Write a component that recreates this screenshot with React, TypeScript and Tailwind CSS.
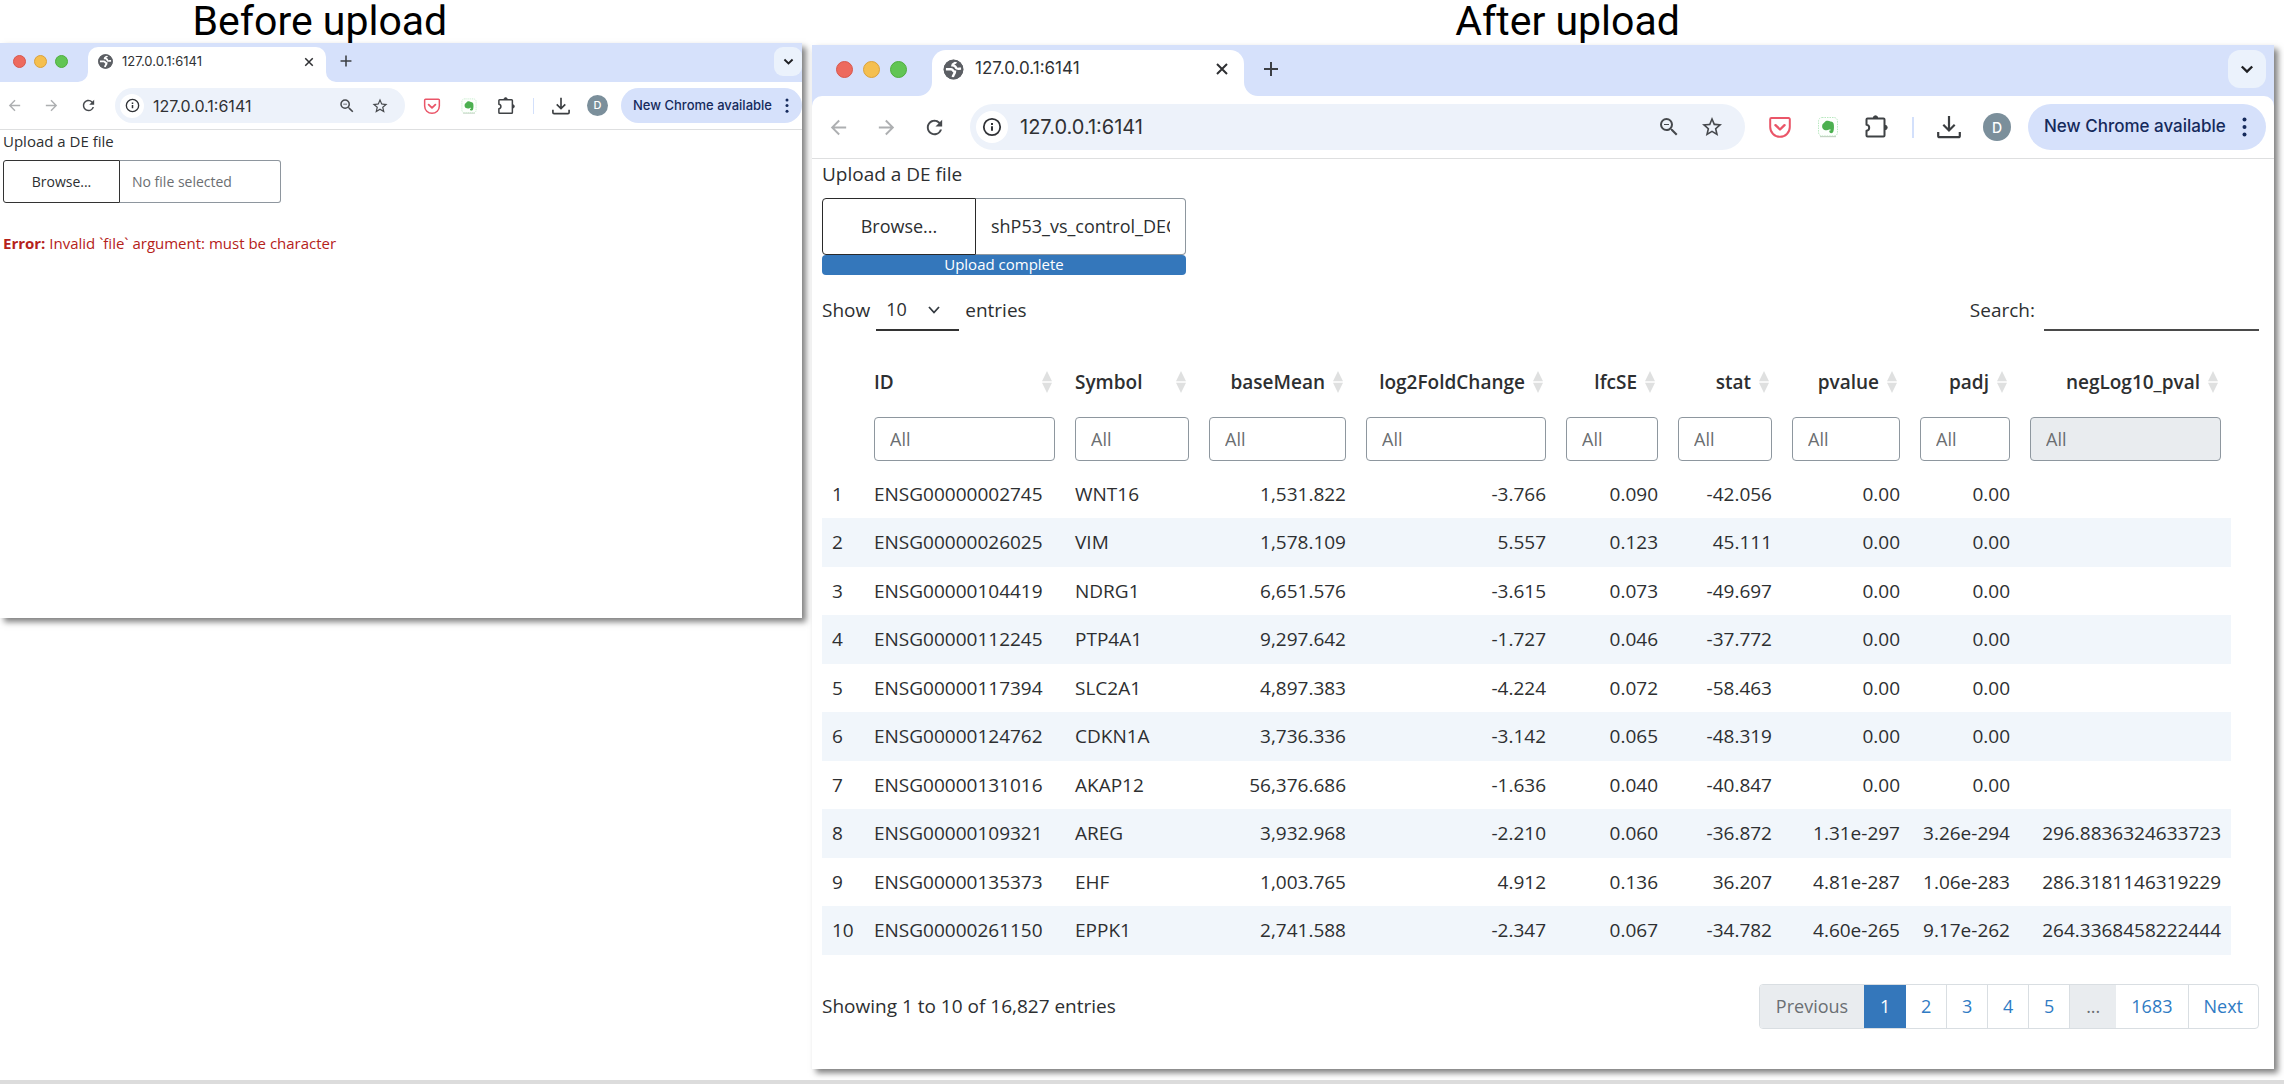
import React from "react";
import { MdArrowBack, MdArrowForward, MdRefresh, MdStarBorder, MdZoomOut } from "react-icons/md";

const small = {
  strip: "h-[39px] pl-[13px]",
  lights: "gap-2 pb-[2px]",
  light: "size-[13px]",
  tabWrap: "ml-[20px] mt-[4px] w-[238px] pb-[6px] pl-[9px] pr-[11px] rounded-t-[10px]",
  curve: "size-[10px]",
  curveL: "-left-[10px]",
  curveR: "-right-[10px]",
  tabIcon: "size-[17px]",
  tabText: "text-[13px] ml-[8px]",
  tabX: "size-[12px]",
  plus: "size-[14px] mt-[11px] ml-[13px]",
  menu: "mt-[4px] w-[28px] h-[29px] rounded-[9px]",
  menuIcon: "size-[11px]",
  bar: "h-[48px]",
  nav: "w-[37px]",
  navFirst: "-ml-1",
  navIcon: "size-[17px]",
  pill: "ml-[8px] h-[35px] pl-[5px] pr-[9px]",
  info: "size-[24px]",
  infoIcon: "size-[15px]",
  url: "ml-[9px] text-[16px]",
  pillBtn: "w-[33px]",
  ext: "ml-[8px]",
  extIcon: "size-[18px]",
  divider: "ml-[9px] mr-[8px] h-[16px] w-px",
  avatar: "size-[21px] text-[11px]",
  chrome: "ml-[5px] h-[35px] w-[181px] pl-[12px] pr-[13px] text-[13px]",
  dots: "h-[15px] w-[4px]",
};

const large: typeof small = {
  strip: "h-[51px] pl-[24px] pr-[8px]",
  lights: "gap-[10px] pb-[3px]",
  light: "size-[17px]",
  tabWrap: "ml-[25px] mt-[5px] w-[312px] pb-[8px] pl-[10px] pr-[14px] rounded-t-[14px]",
  curve: "size-[14px]",
  curveL: "-left-[14px]",
  curveR: "-right-[14px]",
  tabIcon: "size-[23px]",
  tabText: "text-[17px] ml-[10px]",
  tabX: "size-[16px]",
  plus: "size-[18px] mt-[15px] ml-[18px]",
  menu: "mt-[5px] size-[38px] rounded-[12px]",
  menuIcon: "size-[14px]",
  bar: "h-[63px] pr-[8px] rounded-t-[10px]",
  nav: "w-[48px]",
  navFirst: "ml-[2px]",
  navIcon: "size-[23px]",
  pill: "ml-[12px] h-[46px] pl-[6px] pr-[12px]",
  info: "size-[32px]",
  infoIcon: "size-[20px]",
  url: "ml-[12px] text-[20px]",
  pillBtn: "w-[43px]",
  ext: "ml-[11px]",
  extIcon: "size-[24px]",
  divider: "ml-[12px] mr-[11px] h-[21px] w-[2px]",
  avatar: "size-[28px] text-[14px]",
  chrome: "ml-[7px] h-[46px] w-[238px] pl-[16px] pr-[19px] text-[17px]",
  dots: "h-[20px] w-[5px]",
};

function GlobeIcon({ className }: { className: string }) {
  return (
    <svg viewBox="0 0 24 24" className={className} fill="none" aria-hidden="true">
      <circle cx="12" cy="12" r="10.200" fill="#5c5f64" />
      <path
        d="M4 11.800h5.500c2.200 0 2.200 2.600 4 2.600 0 2.600-2.200 2.400-2.200 5.800"
        stroke="#fff"
        strokeWidth="2.600"
      />
      <path d="M14.500 3.800c-.5 2.400-3.700 1.600-3.700 3.900 1.700 0 3.400.4 4 2.900.8 1.200 3 .4 5.200.6" stroke="#fff" strokeWidth="2.400" />
      <circle cx="12" cy="12" r="9.400" stroke="#5c5f64" strokeWidth="1.900" />
    </svg>
  );
}

function InfoIcon({ className }: { className: string }) {
  return (
    <svg viewBox="0 0 20 20" className={className} fill="none" stroke="#303236" strokeWidth="1.800" aria-hidden="true">
      <circle cx="10" cy="10" r="8.200" />
      <path d="M10 9.200v4.600M10 6v1.900" strokeWidth="2" />
    </svg>
  );
}

function PocketIcon({ className }: { className: string }) {
  return (
    <svg viewBox="0 0 24 24" className={className} fill="none" stroke="#ea5568" strokeWidth="2" aria-hidden="true">
      <path d="M3.400 3h17.200a1.200 1.200 0 0 1 1.200 1.200V12a9.800 9.800 0 0 1-19.600 0V4.200A1.200 1.200 0 0 1 3.400 3z" />
      <path d="M7.500 10.200 12 14.500l4.500-4.300" strokeWidth="2.400" strokeLinecap="round" strokeLinejoin="round" />
    </svg>
  );
}

function ElephantIcon({ className }: { className: string }) {
  return (
    <svg viewBox="0 0 24 24" className={className} aria-hidden="true">
      <rect x="2.500" y="2.500" width="19" height="18.500" rx="3.500" fill="#fdfffd" stroke="#b9e8c0" strokeDasharray="1.500 1" />
      <path d="M4 21.600h16" stroke="#c3d3c3" strokeWidth="1.200" />
      <path
        d="M6.500 9.300 9.800 6c1.700-.6 3.600-.3 4.600.6 2.500.3 3.300 1.200 3.500 3.600.2 2.800 0 6.200-1.300 7.600-1.600.8-3.500.1-3.300-1.500.1-1 1-1.300 1.800-1-.2-1-1.300-1-2-.8-1 1-3.600 1-5.200.2C6.500 14 5.500 11.800 6.500 9.300z"
        fill="#4cb050"
      />
    </svg>
  );
}

function PuzzleIcon({ className }: { className: string }) {
  return (
    <svg viewBox="0 0 24 24" className={className} fill="none" stroke="#3f4245" strokeWidth="2" strokeLinejoin="round" aria-hidden="true">
      <path d="M3.500 3.500h16a1 1 0 0 1 1 1v16a1 1 0 0 1-1 1h-16a1 1 0 0 1-1-1v-4.800c3.600-.4 3.600-5.600 0-6V4.500a1 1 0 0 1 1-1z" />
      <path d="M9.300 3a2.200 2.200 0 0 1 4.400 0zM21 10.300a2.200 2.200 0 0 1 0 4.400z" fill="#3f4245" strokeWidth="1" />
    </svg>
  );
}

function DownloadIcon({ className }: { className: string }) {
  return (
    <svg viewBox="0 0 24 24" className={className} fill="none" stroke="#3b3e41" strokeWidth="2.200" aria-hidden="true">
      <path d="M12 1v14M6.300 9.800 12 15.500l5.700-5.700" />
      <path d="M1.200 17v3.700a1.500 1.500 0 0 0 1.500 1.500h18.600a1.500 1.500 0 0 0 1.500-1.500V17" />
    </svg>
  );
}

function Dots({ className }: { className: string }) {
  return (
    <svg viewBox="0 0 5 20" className={className} fill="#152a5c" aria-hidden="true">
      <circle cx="2.500" cy="2.500" r="2" />
      <circle cx="2.500" cy="10" r="2" />
      <circle cx="2.500" cy="17.500" r="2" />
    </svg>
  );
}

function BrowserWindow({ size, className, children }: { size: "sm" | "lg"; className: string; children: React.ReactNode }) {
  const s = size === "sm" ? small : large;
  const center = "flex shrink-0 items-center justify-center";
  return (
    <section className={`flex flex-col bg-white shadow-[4px_4px_6px_rgba(0,0,0,0.5)] ${className}`}>
      <div className="bg-[#d6e1fb] font-[Inter,sans-serif]">
        <div className={`flex ${s.strip}`}>
          <div className={`flex items-center ${s.lights}`}>
            <span className={`rounded-full border border-[#d8574c] bg-[#ed6a5e] ${s.light}`} />
            <span className={`rounded-full border border-[#dba23a] bg-[#f5bf4f] ${s.light}`} />
            <span className={`rounded-full border border-[#4fae3e] bg-[#61c554] ${s.light}`} />
          </div>
          <div className={`relative flex items-center bg-white ${s.tabWrap}`}>
            <svg viewBox="0 0 10 10" className={`absolute bottom-0 ${s.curve} ${s.curveL}`} aria-hidden="true">
              <path d="M10 0v10H0A10 10 0 0 0 10 0z" fill="#fff" />
            </svg>
            <svg viewBox="0 0 10 10" className={`absolute bottom-0 ${s.curve} ${s.curveR}`} aria-hidden="true">
              <path d="M0 0v10h10A10 10 0 0 1 0 0z" fill="#fff" />
            </svg>
            <GlobeIcon className={`shrink-0 ${s.tabIcon}`} />
            <span className={`flex-1 text-[#303134] ${s.tabText}`}>127.0.0.1:6141</span>
            <button aria-label="Close tab">
              <svg viewBox="0 0 16 16" className={s.tabX} stroke="#2f3033" strokeWidth="2" aria-hidden="true">
                <path d="M3 3l10 10M13 3L3 13" />
              </svg>
            </button>
          </div>
          <button aria-label="New tab" className={`shrink-0 ${s.plus}`}>
            <svg viewBox="0 0 18 18" className="size-full" stroke="#3c3f44" strokeWidth="2" aria-hidden="true">
              <path d="M9 2v14M2 9h14" />
            </svg>
          </button>
          <button aria-label="Search tabs" className={`ml-auto bg-[#ebf2fc] ${center} ${s.menu}`}>
            <svg viewBox="0 0 14 14" className={s.menuIcon} fill="none" stroke="#1f2023" strokeWidth="2.400" aria-hidden="true">
              <path d="M1.800 4.500 7 9.500l5.200-5" />
            </svg>
          </button>
        </div>
        <div className={`flex items-center border-b border-[#dedfe0] bg-white text-[#46494d] ${s.bar}`}>
          <button aria-label="Back" className={`text-[#adafb1] ${center} ${s.nav} ${s.navFirst}`}>
            <MdArrowBack className={s.navIcon} />
          </button>
          <button aria-label="Forward" className={`text-[#adafb1] ${center} ${s.nav}`}>
            <MdArrowForward className={s.navIcon} />
          </button>
          <button aria-label="Reload" className={`${center} ${s.nav}`}>
            <MdRefresh className={s.navIcon} />
          </button>
          <div className={`flex min-w-0 flex-1 items-center rounded-full bg-[#edf2fa] ${s.pill}`}>
            <button aria-label="Site information" className={`rounded-full bg-white ${center} ${s.info}`}>
              <InfoIcon className={s.infoIcon} />
            </button>
            <input aria-label="Address" defaultValue="127.0.0.1:6141" className={`w-0 flex-1 bg-transparent text-[#303134] outline-none ${s.url}`} />
            <button aria-label="Zoom" className={`${center} ${s.pillBtn}`}>
              <MdZoomOut className={s.extIcon} />
            </button>
            <button aria-label="Bookmark" className={`${center} ${s.pillBtn}`}>
              <MdStarBorder className={s.extIcon} />
            </button>
          </div>
          <button aria-label="Pocket" className={`${center} ${s.nav} ${s.ext}`}>
            <PocketIcon className={s.extIcon} />
          </button>
          <button aria-label="Web clipper" className={`${center} ${s.nav}`}>
            <ElephantIcon className={s.extIcon} />
          </button>
          <button aria-label="Extensions" className={`${center} ${s.nav}`}>
            <PuzzleIcon className={s.extIcon} />
          </button>
          <span className={`shrink-0 bg-[#d3e0fb] ${s.divider}`} />
          <button aria-label="Downloads" className={`${center} ${s.nav}`}>
            <DownloadIcon className={s.extIcon} />
          </button>
          <div className={`${center} ${s.nav}`}>
            <button aria-label="Profile" className={`rounded-full bg-[#7b8f9b] font-medium text-white ${center} ${s.avatar}`}>
              D
            </button>
          </div>
          <button className={`flex shrink-0 items-center justify-between whitespace-nowrap rounded-full bg-[#d6e1fb] font-medium text-[#152a5c] ${s.chrome}`}>
            New Chrome available
            <Dots className={s.dots} />
          </button>
        </div>
      </div>
      {children}
    </section>
  );
}

const columns = [
  { name: "", width: 42 },
  { name: "ID", width: 201 },
  { name: "Symbol", width: 134 },
  { name: "baseMean", width: 157 },
  { name: "log2FoldChange", width: 200 },
  { name: "lfcSE", width: 112 },
  { name: "stat", width: 114 },
  { name: "pvalue", width: 128 },
  { name: "padj", width: 110 },
  { name: "negLog10_pval", width: 211 },
];

const rows = [
  ["1", "ENSG00000002745", "WNT16", "1,531.822", "-3.766", "0.090", "-42.056", "0.00", "0.00", ""],
  ["2", "ENSG00000026025", "VIM", "1,578.109", "5.557", "0.123", "45.111", "0.00", "0.00", ""],
  ["3", "ENSG00000104419", "NDRG1", "6,651.576", "-3.615", "0.073", "-49.697", "0.00", "0.00", ""],
  ["4", "ENSG00000112245", "PTP4A1", "9,297.642", "-1.727", "0.046", "-37.772", "0.00", "0.00", ""],
  ["5", "ENSG00000117394", "SLC2A1", "4,897.383", "-4.224", "0.072", "-58.463", "0.00", "0.00", ""],
  ["6", "ENSG00000124762", "CDKN1A", "3,736.336", "-3.142", "0.065", "-48.319", "0.00", "0.00", ""],
  ["7", "ENSG00000131016", "AKAP12", "56,376.686", "-1.636", "0.040", "-40.847", "0.00", "0.00", ""],
  ["8", "ENSG00000109321", "AREG", "3,932.968", "-2.210", "0.060", "-36.872", "1.31e-297", "3.26e-294", "296.8836324633723"],
  ["9", "ENSG00000135373", "EHF", "1,003.765", "4.912", "0.136", "36.207", "4.81e-287", "1.06e-283", "286.3181146319229"],
  ["10", "ENSG00000261150", "EPPK1", "2,741.588", "-2.347", "0.067", "-34.782", "4.60e-265", "9.17e-262", "264.3368458222444"],
];

function SortIcon() {
  return (
    <svg viewBox="0 0 10 22" className="h-[22px] w-[10px] shrink-0" fill="#dfe0e0" aria-hidden="true">
      <path d="M5 0 10 10.300H0zM0 11.700h10L5 22z" />
    </svg>
  );
}

function ResultsTable() {
  return (
    <table className="mt-[25px] w-[98%] table-fixed whitespace-nowrap text-[19px]">
      <colgroup>
        {columns.map((c) => (
          <col key={c.name} style={{ width: c.width }} />
        ))}
      </colgroup>
      <thead>
        <tr className="h-[52px]">
          {columns.map((c, i) => (
            <th key={c.name} className="pl-[10px] pr-[13px] font-semibold">
              {i > 0 && (
                <button className={`flex w-full items-center gap-2 ${i < 3 ? "justify-between" : "justify-end"}`}>
                  {c.name}
                  <SortIcon />
                </button>
              )}
            </th>
          ))}
        </tr>
        <tr className="h-[62px]">
          {columns.map((c, i) => (
            <td key={c.name} className="px-[10px]">
              {i > 0 && (
                <input
                  aria-label={`Filter ${c.name}`}
                  placeholder="All"
                  disabled={i === 9}
                  className="block h-[44px] w-full rounded-[4px] border border-[#8e979f] px-[15px] text-[18px] placeholder:text-[#6b6e71] disabled:bg-[#e9ecef]"
                />
              )}
            </td>
          ))}
        </tr>
      </thead>
      <tbody>
        {rows.map((r) => (
          <tr key={r[0]} className="h-12 even:h-[49px] even:bg-[#f1f6fb]">
            {r.map((v, i) => (
              <td key={i} className={i < 3 ? "px-[10px]" : "px-[10px] text-right"}>
                {v}
              </td>
            ))}
          </tr>
        ))}
      </tbody>
    </table>
  );
}

const pages = ["Previous", "1", "2", "3", "4", "5", "...", "1683", "Next"];

function Pagination() {
  return (
    <nav aria-label="Table pages" className="flex h-[45px] overflow-hidden rounded-[4px] border border-[#d9dee2] text-[18px] text-[#2f7bc4]">
      {pages.map((p) => {
        if (p === "1") {
          return (
            <button key={p} aria-current="page" className="-my-px w-[42px] bg-[#3477bb] text-white">
              {p}
            </button>
          );
        }
        if (p === "Previous" || p === "...") {
          return (
            <button key={p} disabled className="bg-[#e9ecef] px-[16px] text-[#6b6f73]">
              {p}
            </button>
          );
        }
        return (
          <button key={p} className={`border-r border-[#d9dee2] last:border-r-0 ${p.length > 1 ? "px-[15px]" : "w-[41px]"}`}>
            {p}
          </button>
        );
      })}
    </nav>
  );
}

export default function App() {
  return (
    <main className="flex min-h-screen flex-col justify-between bg-white font-['Open_Sans',sans-serif] text-[#2d2f31]">
      <div className="grid grid-cols-[802fr_1462fr] items-start gap-[10px] pr-[10px]">
        <div>
          <h1 className="h-[43px] pl-[24%] font-[Roboto,sans-serif] text-[41px] leading-[43px] text-black">Before upload</h1>
          <BrowserWindow size="sm" className="min-h-[575px]">
            <div className="px-[3px] text-[15px]">
              <label htmlFor="empty-file" className="block leading-[22px]">
                Upload a DE file
              </label>
              <div className="mt-[8px] flex h-[43px] w-[278px]">
                <button className="w-[117px] shrink-0 rounded-l-[3px] border border-[#333] text-[14px]">Browse...</button>
                <input
                  id="empty-file"
                  readOnly
                  placeholder="No file selected"
                  className="w-0 flex-1 rounded-r-[3px] border border-l-0 border-[#8e969e] px-[12px] text-[14px] placeholder:text-[#6b6e71]"
                />
              </div>
              <p className="mt-[29px] leading-[22px] text-[#b5221a]">
                <strong>Error:</strong> Invalid `file` argument: must be character
              </p>
            </div>
          </BrowserWindow>
        </div>
        <div>
          <h1 className="h-[45px] pl-[44%] font-[Roboto,sans-serif] text-[41px] leading-[43px] text-black">After upload</h1>
          <BrowserWindow size="lg" className="pb-[40px]">
            <div className="pl-[10px] pr-[15px] text-[19px]">
              <label htmlFor="de-file" className="block pt-px leading-[28px]">
                Upload a DE file
              </label>
              <div className="mt-[10px] flex h-[57px] w-[364px]">
                <button className="w-[154px] shrink-0 rounded-l-[4px] border border-[#2a2a2a] text-[18px]">Browse...</button>
                <input
                  id="de-file"
                  readOnly
                  value="shP53_vs_control_DEG.csv"
                  className="w-0 flex-1 rounded-r-[4px] border border-l-0 border-[#8e979f] px-[15px] text-[18px]"
                />
              </div>
              <div className="h-[20px] w-[364px] rounded-[4px] bg-[#3477bb] text-center text-[15px] leading-[19px] text-white">Upload complete</div>
              <div className="mt-[14px] flex h-[42px] items-center justify-between">
                <label className="flex items-center">
                  Show
                  <span className="relative mx-[6px] flex items-center">
                    <select className="h-[42px] w-[83px] appearance-none border-b-2 border-[#333] bg-transparent pl-[10px] text-[18px]">
                      <option>10</option>
                    </select>
                    <svg viewBox="0 0 12 8" className="pointer-events-none absolute right-[19px] h-[8px] w-[12px]" fill="none" stroke="#343a40" strokeWidth="1.800" aria-hidden="true">
                      <path d="M1 1l5 5.500L11 1" />
                    </svg>
                  </span>
                  entries
                </label>
                <label className="flex items-center">
                  Search:
                  <input type="search" className="ml-[9px] h-[42px] w-[215px] border-b-2 border-[#4a4a4a] outline-none" />
                </label>
              </div>
              <ResultsTable />
              <div className="mt-[29px] flex items-center justify-between">
                <p>Showing 1 to 10 of 16,827 entries</p>
                <Pagination />
              </div>
            </div>
          </BrowserWindow>
        </div>
      </div>
      <div className="h-[4px] bg-[#dcdcdc]" />
    </main>
  );
}
